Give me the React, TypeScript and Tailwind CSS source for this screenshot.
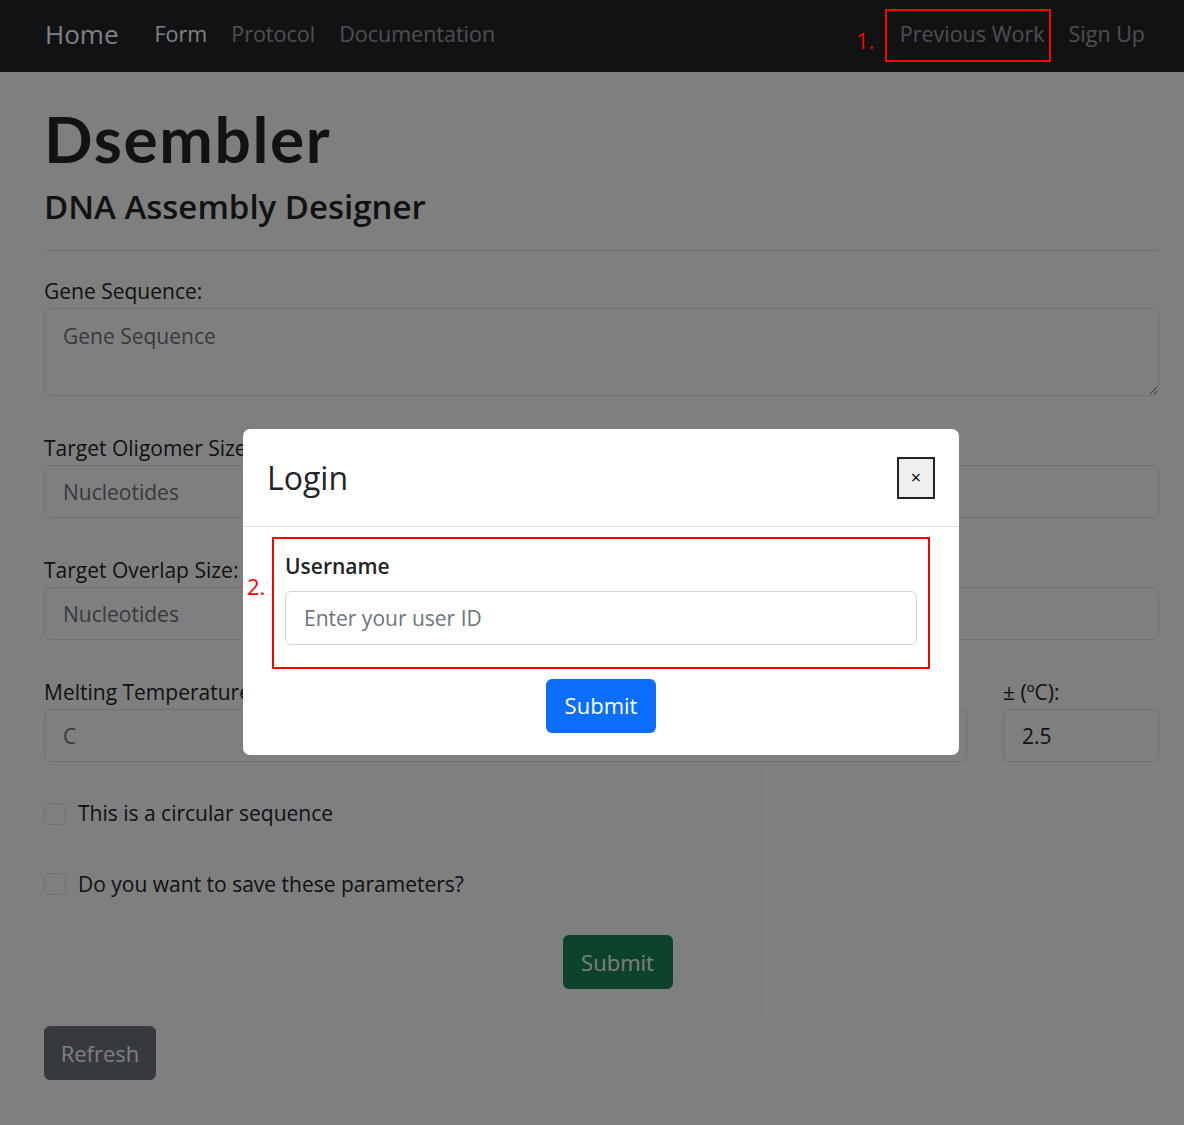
import { useState } from 'react'

const sans = 'font-["Open_Sans","Noto_Sans",sans-serif]'

function Field({ label, placeholder }: { label: string; placeholder: string }) {
  return (
    <div className="mt-[37px]">
      <label className="block text-[21px] leading-[30px] text-[#212529]">{label}</label>
      <input
        className="mt-[2px] h-[53px] w-full rounded-[6px] border border-[#dee2e6] px-[18px] text-[21px] text-[#212529] placeholder:text-[#6c757d]"
        placeholder={placeholder}
      />
    </div>
  )
}

export default function App() {
  const [user, setUser] = useState('')

  return (
    <div className={`relative min-h-[1125px] bg-white ${sans}`}>
      <nav className="flex h-[72px] items-center bg-[#212529] px-[45px] pb-[4px]">
        <a className="text-[26px] text-white">Home</a>
        <div className="ml-[36px] flex items-center gap-[24px] text-[21.5px]">
          <a className="text-white">Form</a>
          <a className="text-white/55">Protocol</a>
          <a className="text-white/55">Documentation</a>
        </div>
        <div className="ml-auto mr-[-6px] flex items-center gap-[24px] text-[21.5px]">
          <a className="text-white/55">Previous Work</a>
          <a className="text-white/55">Sign Up</a>
        </div>
      </nav>

      <main className="px-[44px] pt-[32px] pr-[25px]">
        <h1 className='font-["Lato",sans-serif] text-[64px] font-bold leading-[70px] tracking-[1.6px] text-[#212529]'>Dsembler</h1>
        <h2 className="mt-[11px] text-[33px] font-semibold leading-[44px] text-[#212529]">DNA Assembly Designer</h2>
        <hr className="mt-[21px] border-[#dee2e6]" />

        <div className="mt-[25px]">
          <label className="block text-[21px] leading-[30px] text-[#212529]">Gene Sequence:</label>
          <textarea
            className="mt-[2px] block h-[88px] w-full rounded-[6px] border border-[#dee2e6] px-[18px] py-[12px] text-[21px] placeholder:text-[#6c757d]"
            placeholder="Gene Sequence"
          />
        </div>

        <Field label="Target Oligomer Size:" placeholder="Nucleotides" />
        <Field label="Target Overlap Size:" placeholder="Nucleotides" />

        <div className="mt-[37px] flex gap-[36px]">
          <div className="flex-1">
            <label className="block text-[21px] leading-[30px] text-[#212529]">Melting Temperature (°C):</label>
            <input
              className="mt-[2px] h-[53px] w-full rounded-[6px] border border-[#dee2e6] px-[18px] text-[21px] placeholder:text-[#6c757d]"
              placeholder="C"
            />
          </div>
          <div className="w-[156px]">
            <label className="block text-[21px] leading-[30px] text-[#212529]">± (ºC):</label>
            <input
              className="mt-[2px] h-[53px] w-full rounded-[6px] border border-[#dee2e6] px-[18px] text-[21px] text-[#212529]"
              defaultValue="2.5"
            />
          </div>
        </div>

        <label className="mt-[36px] flex items-center gap-[12px] text-[21px] text-[#212529]">
          <span className="h-[22px] w-[22px] rounded-[5px] border border-[#dee2e6] bg-white" />
          This is a circular sequence
        </label>
        <label className="mt-[39px] flex items-center gap-[12px] text-[21px] text-[#212529]">
          <span className="h-[22px] w-[22px] rounded-[5px] border border-[#dee2e6] bg-white" />
          Do you want to save these parameters?
        </label>

        <div className="mt-[35px] flex justify-center pl-[32px]">
          <button className="h-[54px] w-[110px] rounded-[6px] bg-[#198754] text-[22px] text-white">Submit</button>
        </div>
        <button className="mt-[37px] h-[54px] w-[112px] rounded-[6px] bg-[#6c757d] text-[22px] text-white">Refresh</button>
      </main>

      {/* backdrop */}
      <div className="absolute inset-0 bg-black/50" />

      {/* annotation 1 */}
      <div className="absolute left-[885px] top-[9px] h-[53px] w-[166px] border-2 border-[#ff0000]" />
      <span className="absolute left-[856px] top-[24px] text-[22px] text-[#ff0000]">1.</span>

      {/* modal */}
      <div className="absolute left-[243px] top-[429px] w-[716px] rounded-[7px] bg-white">
        <div className="flex h-[98px] items-center justify-between border-b border-[#dee2e6] px-[24px]">
          <h3 className="text-[32px] font-medium text-[#212529]">Login</h3>
          <button className="flex h-[42px] w-[38px] items-center justify-center border-2 border-[#222] bg-[#efefef] text-[18px] text-black">
            ×
          </button>
        </div>
        <div className="relative px-[29px] pt-[10px] pb-[22px]">
          <span className="absolute left-[4px] top-[43px] text-[22px] text-[#ff0000]">2.</span>
          <div className="border-2 border-[#ff0000] px-[11px] pt-[12px] pb-[22px]">
            <label className="block text-[21px] font-semibold text-[#212529]">Username</label>
            <input
              value={user}
              onChange={e => setUser(e.target.value)}
              className="mt-[8px] h-[54px] w-full rounded-[6px] border border-[#ced4da] px-[18px] text-[21px] placeholder:text-[#6c757d]"
              placeholder="Enter your user ID"
            />
          </div>
          <div className="mt-[10px] flex justify-center">
            <button className="h-[54px] w-[110px] rounded-[6px] bg-[#0d6efd] text-[22px] text-white">Submit</button>
          </div>
        </div>
      </div>
    </div>
  )
}
